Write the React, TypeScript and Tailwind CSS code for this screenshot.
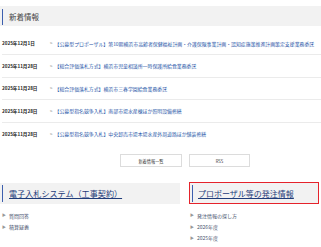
const news = [
  { date: "2025年12月1日", title: "【公募型プロポーザル】第10期横浜市高齢者保健福祉計画・介護保険事業計画・認知症施策推進計画策定支援業務委託" },
  { date: "2025年11月28日", title: "【総合評価落札方式】横浜市児童相談所一時保護所給食業務委託" },
  { date: "2025年11月28日", title: "【総合評価落札方式】横浜市三春学園給食業務委託" },
  { date: "2025年11月28日", title: "【公募型指名競争入札】南部市場水産棟ほか照明設備修繕" },
  { date: "2025年11月28日", title: "【公募型指名競争入札】中央卸売市場本場水産外周道路ほか舗装修繕" },
];

function ListItem({ label }: { label: string }) {
  return (
    <li className="flex items-center h-[11.3px] text-[5px] text-[#4a5570]">
      <span className="text-[4px] text-[#999] mr-[3px]">▶</span>
      {label}
    </li>
  );
}

export default function App() {
  return (
    <div className="w-[321px] h-[247px] overflow-hidden bg-white font-['Noto_Sans_CJK_JP','Noto_Sans',sans-serif]">
      <div className="mt-[6px] h-[20px] bg-[#f2f2f2] pl-[2px] pt-[3px]">
        <div className="h-[16px] border-l border-[#3d5fae] pl-[6px] flex items-center text-[7.5px] text-[#444]">
          新着情報
        </div>
      </div>

      <ul className="mt-[6.75px] pl-[2px]">
        {news.map((n, i) => (
          <li
            key={i}
            className={
              "flex items-center h-[22.5px] whitespace-nowrap " +
              (i < news.length - 1 ? "border-b border-[#ebebeb]" : "")
            }
          >
            <span className="w-[48px] text-[4.6px] font-bold text-[#222]">{n.date}</span>
            <span className="text-[4.6px] text-[#777] mr-[2px]">&gt;</span>
            <span className="text-[4.9px] text-[#2856a8]">{n.title}</span>
          </li>
        ))}
      </ul>

      <div className="flex gap-[7px] ml-[120px] mt-[9px]">
        <div className="w-[62px] h-[13px] border border-[#dcdcdc] flex items-center justify-center text-[4.2px] text-[#333]">
          新着情報一覧
        </div>
        <div className="w-[61px] h-[13px] border border-[#dcdcdc] flex items-center justify-center text-[4.2px] text-[#333]">
          RSS
        </div>
      </div>

      <div className="flex gap-[9px] mt-[15px]">
        <div className="w-[180px]">
          <div className="mt-[1px] h-[21px] bg-[#f2f2f2] pl-[2px] pt-[2px]">
            <div className="h-[17px] border-l border-[#3d5fae] pl-[6px] flex items-center text-[8.1px] text-[#1f3c7a] underline underline-offset-[1px]">
              電子入札システム（工事契約）
            </div>
          </div>
          <ul className="mt-[5.5px] pl-[2px]">
            <ListItem label="質問回答" />
            <ListItem label="積算疑義" />
          </ul>
        </div>
        <div className="w-[130px]">
          <div className="h-[22px] border border-[#e5232b] bg-[#f2f2f2] pl-[2px] pt-[2px]">
            <div className="h-[17px] border-l border-[#3d5fae] pl-[5px] flex items-center text-[8px] text-[#1f3c7a] underline underline-offset-[1px]">
              プロポーザル等の発注情報
            </div>
          </div>
          <ul className="mt-[5.5px] pl-[1px]">
            <ListItem label="発注情報の探し方" />
            <ListItem label="2026年度" />
            <ListItem label="2025年度" />
            <ListItem label="2024年度" />
          </ul>
        </div>
      </div>
    </div>
  );
}
